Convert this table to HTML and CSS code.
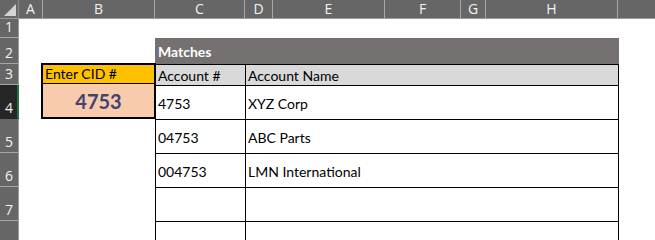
FILE: index.html
```html
<!DOCTYPE html>
<html>
<head>
    <title>CID Lookup</title>
    <link rel="stylesheet" href="styles.css">
</head>
<body>
    <div class="sheet">
        <!-- column headers -->
        <div class="corner"><span class="corner-mark"></span></div>
        <div class="col-head">A</div>
        <div class="col-head">B</div>
        <div class="col-head">C</div>
        <div class="col-head">D</div>
        <div class="col-head">E</div>
        <div class="col-head">F</div>
        <div class="col-head">G</div>
        <div class="col-head">H</div>
        <div class="col-head last"></div>

        <!-- row headers -->
        <div class="row-head r1">1</div>
        <div class="row-head r2">2</div>
        <div class="row-head r3">3</div>
        <div class="row-head r4 selected">4</div>
        <div class="row-head r5">5</div>
        <div class="row-head r6">6</div>
        <div class="row-head r7">7</div>
        <div class="row-head r8"></div>

        <!-- lookup input -->
        <div class="cid">
            <div class="cid-label">Enter CID #</div>
            <div class="cid-value">4753</div>
        </div>

        <!-- matches table -->
        <div class="matches">
            <div class="matches-title">Matches</div>
            <div class="cell head">Account #</div>
            <div class="cell head wide">Account Name</div>
            <div class="cell">4753</div>
            <div class="cell wide">XYZ Corp</div>
            <div class="cell">04753</div>
            <div class="cell wide">ABC Parts</div>
            <div class="cell">004753</div>
            <div class="cell wide">LMN International</div>
            <div class="cell"></div>
            <div class="cell wide"></div>
            <div class="cell"></div>
            <div class="cell wide"></div>
        </div>
    </div>
</body>
</html>
```

FILE: styles.css
```css
body {
    margin: 0;
    background: #fff;
    font-family: Lato, "Liberation Sans", sans-serif;
    overflow: hidden;
}

.sheet {
    display: grid;
    grid-template-columns: 19px 24px 112px 90px 28px 112px 76px 25px 132px 1fr;
    grid-template-rows: 19px 19px 26px 21px 34px 34px 34px 34px 34px;
    width: 655px;
    height: 240px;
    overflow: hidden;
}

/* headers */
.corner,
.col-head {
    background: #666;
    border-right: 1px solid #a6a6a6;
    border-bottom: 1px solid #9a9a9a;
    box-sizing: border-box;
}
.corner {
    position: relative;
    border-right-color: #8a8a8a;
}
.corner-mark {
    position: absolute;
    right: 2px;
    bottom: 2px;
    width: 0;
    height: 0;
    border-left: 12px solid transparent;
    border-bottom: 12px solid #d4d4d4;
}
.col-head {
    display: flex;
    align-items: center;
    justify-content: center;
    color: #f2f2f2;
    font-family: "Open Sans", sans-serif;
    font-size: 14px;
    padding-bottom: 1px;
}
.col-head.last {
    border-right: none;
}

.row-head {
    grid-column: 1;
    background: #666;
    color: #f2f2f2;
    font-family: "Open Sans", sans-serif;
    font-size: 14px;
    border-right: 1px solid #9a9a9a;
    border-bottom: 1px solid #a6a6a6;
    box-sizing: border-box;
    display: flex;
    align-items: flex-end;
    padding: 0 0 1px 5px;
}
.r1 { grid-row: 2; }
.r2 { grid-row: 3; }
.r3 { grid-row: 4; }
.r4 { grid-row: 5; }
.r5 { grid-row: 6; }
.r6 { grid-row: 7; }
.r7 { grid-row: 8; }
.r8 { grid-row: 9; border-bottom: none; }
.row-head.selected {
    background: #262626;
    border-right: 2px solid #217346;
    border-bottom-color: #262626;
}

/* CID input box */
.cid {
    grid-column: 3;
    grid-row: 4 / span 2;
    margin: -1px -1px 0 -2px;
    border: 2px solid #000;
    display: grid;
    grid-template-rows: 19px 1fr;
    z-index: 1;
}
.cid-label {
    background: #ffc000;
    border-bottom: 1px solid #000;
    font-size: 14px;
    color: #000;
    display: flex;
    align-items: flex-end;
    padding: 0 0 1px 2px;
}
.cid-value {
    background: #f8cbad;
    color: #434371;
    font-weight: bold;
    font-size: 20px;
    display: flex;
    align-items: center;
    justify-content: center;
    padding-top: 1px;
}

/* matches table */
.matches {
    grid-column: 4 / 10;
    grid-row: 3 / 10;
    display: grid;
    grid-template-columns: 90px 1fr;
    grid-template-rows: 26px 21px 34px 34px 34px 34px 34px;
    border-right: 1px solid #000;
    width: 463px;
}
.matches-title {
    grid-column: 1 / 3;
    background: #757171;
    color: #fff;
    font-weight: bold;
    font-size: 14px;
    display: flex;
    align-items: flex-end;
    padding: 0 0 4px 3px;
    margin-right: -1px;
}
.cell {
    border-top: 1px solid #000;
    border-left: 1px solid #000;
    font-size: 14px;
    color: #000;
    display: flex;
    align-items: center;
    padding: 1px 0 0 2px;
}
.cell.head {
    background: #d9d9d9;
    align-items: flex-end;
    padding: 0 0 1px 2px;
}
```
